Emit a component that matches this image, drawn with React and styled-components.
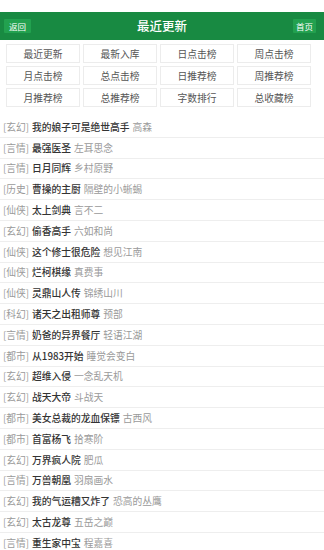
import React from "react";
import styled, { createGlobalStyle } from "styled-components";

const Global = createGlobalStyle`
  html, body { margin: 0; padding: 0; background: #fff; }
  body { font-family: "Noto Sans CJK SC", "Noto Sans", sans-serif; }
  * { box-sizing: border-box; }
`;

const Page = styled.div`
  width: 324px;
  padding-top: 12px;
  background: #fff;
`;

const Header = styled.header`
  height: 28px;
  background: #188a42;
  display: flex;
  align-items: center;
  justify-content: space-between;
  padding: 0 8px 0 4px;
  position: relative;
`;

const HeadButton = styled.a`
  height: 14px;
  padding: 0 ${(p) => p.$pad}px;
  background: #22a14f;
  color: #fff;
  font-size: 8.5px;
  line-height: 14px;
  display: flex;
  align-items: center;
  border-radius: 1px;
`;

const Title = styled.h1`
  position: absolute;
  left: 0;
  right: 0;
  top: 0;
  height: 28px;
  margin: 0;
  text-align: center;
  line-height: 28px;
  font-size: 12.5px;
  font-weight: 500;
  color: #fff;
  pointer-events: none;
`;

const Nav = styled.nav`
  display: grid;
  grid-template-columns: repeat(4, 74px);
  grid-auto-rows: 19px;
  gap: 3px;
  padding: 4px 0 0 6px;
`;

const NavItem = styled.a`
  border: 1px solid #ececec;
  background: #fff;
  color: #555;
  font-size: 9.75px;
  display: flex;
  align-items: center;
  justify-content: center;
`;

const List = styled.ul`
  list-style: none;
  margin: 10px 0 0;
  padding: 0;
`;

const Row = styled.li`
  height: 20.8px;
  border-bottom: 1px solid #eeeeee;
  padding-left: 3px;
  display: flex;
  align-items: center;
  font-size: 9.75px;
  white-space: nowrap;
  overflow: hidden;
`;

const Cat = styled.span`
  color: #9a9a9a;
  margin-right: 3px;
`;

const BookTitle = styled.span`
  color: #333;
  font-weight: 500;
  margin-right: 3px;
`;

const Author = styled.span`
  color: #9a9a9a;
`;

const navs = [
  "最近更新", "最新入库", "日点击榜", "周点击榜",
  "月点击榜", "总点击榜", "日推荐榜", "周推荐榜",
  "月推荐榜", "总推荐榜", "字数排行", "总收藏榜",
];

const books = [
  ["玄幻", "我的娘子可是绝世高手", "高森"],
  ["言情", "最强医圣", "左耳思念"],
  ["言情", "日月同辉", "乡村原野"],
  ["历史", "曹操的主厨", "隔壁的小蜥蜴"],
  ["仙侠", "太上剑典", "言不二"],
  ["玄幻", "偷香高手", "六如和尚"],
  ["仙侠", "这个修士很危险", "想见江南"],
  ["仙侠", "烂柯棋缘", "真费事"],
  ["仙侠", "灵鼎山人传", "锦绣山川"],
  ["科幻", "诸天之出租师尊", "预部"],
  ["言情", "奶爸的异界餐厅", "轻语江湖"],
  ["都市", "从1983开始", "睡觉会变白"],
  ["玄幻", "超维入侵", "一念乱天机"],
  ["玄幻", "战天大帝", "斗战天"],
  ["都市", "美女总裁的龙血保镖", "古西风"],
  ["都市", "首富杨飞", "拾寒阶"],
  ["玄幻", "万界疯人院", "肥瓜"],
  ["言情", "万兽朝凰", "羽扇画水"],
  ["玄幻", "我的气运糟又炸了", "恐高的丛鹰"],
  ["玄幻", "太古龙尊", "五岳之巅"],
  ["言情", "重生家中宝", "程嘉喜"],
];

export default function App() {
  return (
    <Page>
      <Global />
      <Header>
        <HeadButton $pad={5}>返回</HeadButton>
        <Title>最近更新</Title>
        <HeadButton $pad={3}>首页</HeadButton>
      </Header>
      <Nav>
        {navs.map((n) => (
          <NavItem key={n}>{n}</NavItem>
        ))}
      </Nav>
      <List>
        {books.map(([c, t, a]) => (
          <Row key={t}>
            <Cat>[{c}]</Cat>
            <BookTitle>{t}</BookTitle>
            <Author>{a}</Author>
          </Row>
        ))}
      </List>
    </Page>
  );
}
